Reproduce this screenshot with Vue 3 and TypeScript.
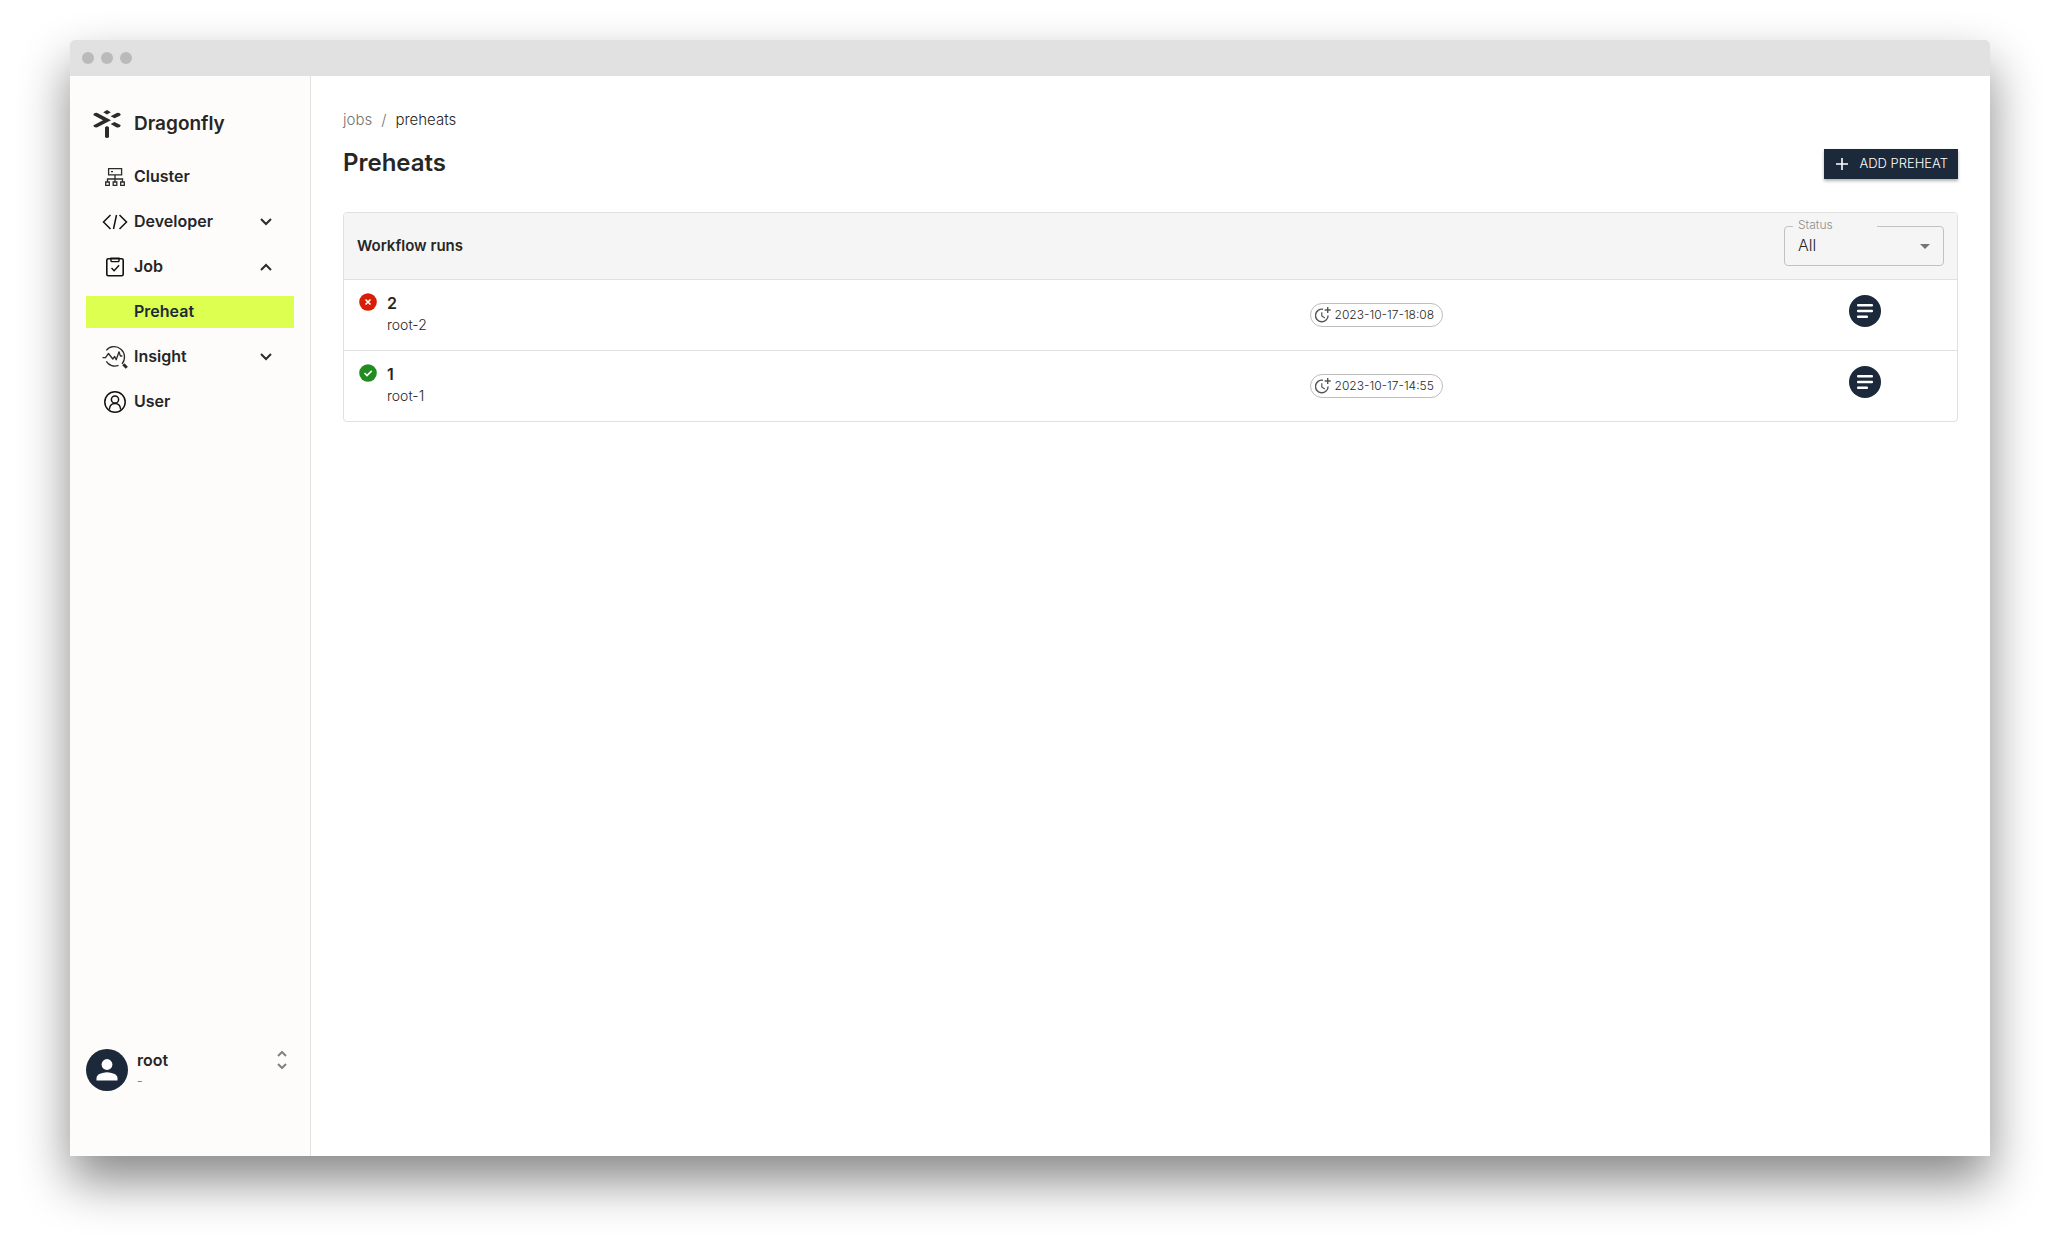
<script setup lang="ts">
import { ref } from 'vue'

interface NavItem {
  label: string
  icon?: 'cluster' | 'developer' | 'job' | 'insight' | 'user'
  expand?: 'open' | 'closed'
  active?: boolean
}

interface Run {
  id: number
  name: string
  state: 'failure' | 'success'
  created: string
}

const navItems: NavItem[] = [
  { label: 'Cluster', icon: 'cluster' },
  { label: 'Developer', icon: 'developer', expand: 'closed' },
  { label: 'Job', icon: 'job', expand: 'open' },
  { label: 'Preheat', active: true },
  { label: 'Insight', icon: 'insight', expand: 'closed' },
  { label: 'User', icon: 'user' },
]

const runs: Run[] = [
  { id: 2, name: 'root-2', state: 'failure', created: '2023-10-17-18:08' },
  { id: 1, name: 'root-1', state: 'success', created: '2023-10-17-14:55' },
]

const status = ref('All')
</script>

<template>
  <div class="desktop">
    <div class="window">
      <div class="titlebar"><i></i><i></i><i></i></div>
      <div class="body">
        <aside class="sidebar">
          <a class="brand" href="#">
            <svg class="logo" width="28" height="28" viewBox="0 0 28 28" fill="#2b2b2b">
              <path d="M14 0l3.800 2.200L14 4.400l-3.800-2.200z" />
              <path d="M0.200 5Q1 2.300 4.300 2.900L18 10.200 4.300 17.300Q1 18 0.200 15.400L10 10.200z" />
              <path d="M27.800 4.800Q27 2.300 23.800 3L17.600 6.300 21.500 8.300 26.500 5.900z" />
              <path d="M27.800 15.600Q27 18.100 23.800 17.400L17.600 14.100 21.500 12.100 26.500 14.500z" />
              <path d="M12 17.300L14 16l2 1.300v9.200Q15.700 28 14 28t-2-1.500z" />
            </svg>
            <span>Dragonfly</span>
          </a>

          <nav class="nav">
            <a
              v-for="item in navItems"
              :key="item.label"
              href="#"
              class="nav-item"
              :class="{ active: item.active }"
            >
              <span class="nav-icon">
                <svg v-if="item.icon === 'cluster'" width="20" height="18" viewBox="0 0 20 18" fill="none" stroke="#2b2b2b" stroke-width="1.300">
                  <path d="M3.600.7h13v6.100h-13zM10 7v7M2.500 14v-3h15v3" />
                  <path d="M.7 14h3.600v3.300H.7zM8.200 14h3.600v3.300H8.200zM15.700 14h3.600v3.300h-3.600z" />
                  <path d="M6 3.700h2" />
                </svg>
                <svg v-else-if="item.icon === 'developer'" width="26" height="16" viewBox="0 0 26 16" fill="none" stroke="#111" stroke-width="1.500">
                  <path d="M8.500 1L1.500 8l7 7M17.500 1l7 7-7 7M14.500 1l-3 14" />
                </svg>
                <svg v-else-if="item.icon === 'job'" width="18" height="20" viewBox="0 0 18 20" fill="none" stroke="#111" stroke-width="1.600">
                  <rect x=".8" y="1.800" width="16.400" height="17" rx="1.500" />
                  <path d="M5 1.200h8v2.600q0 .8-.8.800H5.800Q5 4.600 5 3.800zM5.500 11l2.600 2.700 5-5.400" stroke-width="1.400" />
                </svg>
                <svg v-else-if="item.icon === 'insight'" width="26" height="24" viewBox="0 0 26 24" fill="none" stroke="#2b2b2b" stroke-width="1.300">
                  <path d="M4.300 5.300A10 10 0 1 1 20 18.800M4.300 16.400A10 10 0 0 0 16.500 20.400" />
                  <path d="M.5 12.700h3L6.500 8.500l4.300 5.500 1.900-2.500 1.500 3.200L17 6.800l1.400 4.200h2" stroke-linejoin="round" />
                  <path d="M21.300 19.300l3.500 3.500" stroke-width="3" />
                </svg>
                <svg v-else-if="item.icon === 'user'" width="22" height="22" viewBox="0 0 22 22" fill="none" stroke="#111" stroke-width="1.500">
                  <circle cx="11" cy="11" r="10.200" />
                  <circle cx="11" cy="8.500" r="3.600" />
                  <path d="M5.300 18.500Q5.800 12.600 11 12.600t5.700 5.900" />
                </svg>
              </span>
              <span class="nav-label">{{ item.label }}</span>
              <svg v-if="item.expand" class="chevron" width="12" height="8" viewBox="0 0 12 8" fill="none" stroke="#2b2b2b" stroke-width="2">
                <path :d="item.expand === 'open' ? 'M1 7l5-5 5 5' : 'M1 1l5 5 5-5'" />
              </svg>
            </a>
          </nav>

          <div class="account">
            <span class="avatar">
              <svg width="22" height="22" viewBox="0 0 22 22" fill="#fff">
                <circle cx="11" cy="5.500" r="5.400" />
                <path d="M.5 21.500v-2.300q0-3 3.500-4.500t7-1.500 7 1.500 3.500 4.500v2.300z" />
              </svg>
            </span>
            <div class="who">
              <span class="who-name">root</span>
              <span class="who-mail">-</span>
            </div>
            <button class="unfold" type="button" aria-label="Account menu">
              <svg width="10" height="18" viewBox="0 0 10 18" fill="none" stroke="#808080" stroke-width="2">
                <path d="M1 5l4-4 4 4M1 13l4 4 4-4" />
              </svg>
            </button>
          </div>
        </aside>

        <main class="content">
          <nav class="crumbs" aria-label="Breadcrumb">
            <a href="#">jobs</a>
            <span class="slash">/</span>
            <span>preheats</span>
          </nav>

          <div class="heading">
            <h1>Preheats</h1>
            <button class="add" type="button">
              <svg width="12" height="12" viewBox="0 0 12 12" stroke="#fff" stroke-width="1.600">
                <path d="M6 0v12M0 6h12" />
              </svg>
              <span>ADD PREHEAT</span>
            </button>
          </div>

          <section class="card">
            <header class="card-head">
              <h2>Workflow runs</h2>
              <div class="field">
                <label for="status">Status</label>
                <select id="status" v-model="status">
                  <option>All</option>
                  <option>Success</option>
                  <option>Failure</option>
                </select>
                <svg class="caret" width="10" height="5" viewBox="0 0 10 5" fill="#757575">
                  <path d="M0 0h10L5 5z" />
                </svg>
              </div>
            </header>

            <div v-for="run in runs" :key="run.id" class="run">
              <div class="run-main">
                <svg v-if="run.state === 'failure'" class="state" width="18" height="18" viewBox="0 0 18 18">
                  <circle cx="9" cy="9" r="8.800" fill="#d81e06" />
                  <path d="M6.500 6.500l5 5M11.500 6.500l-5 5" stroke="#fff" stroke-width="1.600" />
                </svg>
                <svg v-else class="state" width="18" height="18" viewBox="0 0 18 18">
                  <circle cx="9" cy="9" r="8.800" fill="#228b22" />
                  <path d="M5.500 9l2.500 2.500 4.700-4.600" fill="none" stroke="#fff" stroke-width="1.600" />
                </svg>
                <div class="run-text">
                  <a class="run-id" href="#">{{ run.id }}</a>
                  <span class="run-name">{{ run.name }}</span>
                </div>
              </div>
              <div class="run-time">
                <span class="chip">
                  <svg width="16" height="16" viewBox="0 0 16 16" fill="none" stroke="#555" stroke-width="1.400">
                    <path d="M8 2.300A6.300 6.300 0 1 0 13.100 8.500" />
                    <path d="M6.800 5.300v3.600l3 2" stroke-width="1.200" />
                    <path d="M12.700 0v6M9.700 3h6" />
                  </svg>
                  <span class="chip-text">{{ run.created }}</span>
                </span>
              </div>
              <div class="run-action">
                <button type="button" class="detail" :aria-label="`Open run ${run.id}`">
                  <svg width="16" height="14" viewBox="0 0 16 14" fill="#fff">
                    <rect width="16" height="2.500" rx="1" />
                    <rect y="5.750" width="16" height="2.500" rx="1" />
                    <rect y="11.500" width="11" height="2.500" rx="1" />
                  </svg>
                </button>
              </div>
            </div>
          </section>
        </main>
      </div>
    </div>
  </div>
</template>

<style>
body {
  margin: 0;
  background: #fff;
}
</style>

<style scoped>
* {
  box-sizing: border-box;
}
.desktop {
  display: flex;
  min-height: 100vh;
  padding: 40px 70px 100px;
  font-family: Inter, 'Liberation Sans', sans-serif;
  font-size: 15px;
  color: #262626;
}
svg {
  display: block;
  flex: none;
}
a {
  color: inherit;
  text-decoration: none;
}
button {
  border: 0;
  padding: 0;
  font-family: inherit;
  cursor: pointer;
}
.window {
  flex: 1;
  display: flex;
  flex-direction: column;
  border-radius: 5px 5px 0 0;
  box-shadow: 0 25px 50px rgba(0, 0, 0, 0.47);
}
.titlebar {
  display: flex;
  align-items: center;
  gap: 7px;
  height: 36px;
  padding: 0 12px;
  border-radius: 5px 5px 0 0;
  background: #e1e1e1;
}
.titlebar i {
  width: 12px;
  height: 12px;
  border-radius: 50%;
  background: #bababa;
}
.body {
  flex: 1;
  display: flex;
  background: #fff;
}
.sidebar {
  display: flex;
  flex-direction: column;
  flex: none;
  width: 241px;
  padding: 32px 16px 65px;
  border-right: 1px solid #e2e2e2;
  background: #fdfcfb;
}
.brand {
  display: flex;
  align-items: center;
  gap: 13px;
  height: 32px;
  padding-left: 7px;
  font-size: 19px;
  font-weight: 600;
}
.brand span,
.nav-label,
.add span,
.chip-text {
  padding-bottom: 2px;
}
.nav {
  display: flex;
  flex-direction: column;
  gap: 13px;
  margin-top: 21px;
}
.nav-item {
  display: flex;
  align-items: center;
  height: 32px;
  padding: 0 22px 0 16px;
  font-size: 16px;
  font-weight: 600;
}
.nav-item.active {
  background: #dcff50;
  color: #1c293a;
}
.nav-icon {
  display: flex;
  justify-content: center;
  width: 26px;
  margin-right: 6px;
}
.nav-label {
  flex: 1;
}
.account {
  display: flex;
  align-items: flex-start;
  margin-top: auto;
}
.avatar {
  display: flex;
  align-items: center;
  justify-content: center;
  width: 42px;
  height: 42px;
  border-radius: 50%;
  background: #1c293a;
}
.who {
  display: flex;
  flex: 1;
  flex-direction: column;
  margin-left: 9px;
}
.who-name {
  font-size: 16px;
  font-weight: 600;
  line-height: 22px;
}
.who-mail {
  font-size: 12px;
  line-height: 20px;
  color: #808080;
}
.unfold {
  margin: 2px 7px 0 0;
  background: none;
}
.content {
  flex: 1;
  min-width: 0;
  padding: 32px;
}
.crumbs {
  display: flex;
  gap: 9px;
  line-height: 24px;
  font-weight: 300;
}
.crumbs a,
.slash {
  color: #757575;
}
.heading {
  display: flex;
  align-items: center;
  justify-content: space-between;
  margin-top: 16px;
  height: 32px;
}
h1 {
  margin: 0;
  padding-bottom: 2px;
  font-size: 24px;
  font-weight: 600;
  line-height: 32px;
}
.add {
  display: flex;
  align-items: center;
  gap: 11px;
  height: 30px;
  padding: 0 10px 0 12px;
  background: #1c293a;
  box-shadow: 0 2px 3px rgba(0, 0, 0, 0.3);
  color: #fff;
  font-size: 13px;
  font-weight: 300;
}
.card {
  margin-top: 32px;
  border: 1px solid #e0e0e0;
  border-radius: 4px;
  overflow: hidden;
}
.card-head {
  display: flex;
  align-items: center;
  justify-content: space-between;
  height: 66px;
  padding: 0 13px;
  background: #f5f5f5;
}
h2 {
  margin: 0;
  padding-bottom: 2px;
  font-size: 15px;
  font-weight: 600;
}
.field {
  position: relative;
  width: 160px;
}
.field label {
  position: absolute;
  top: -8px;
  left: 9px;
  width: 84px;
  padding-left: 5px;
  background: #f5f5f5;
  color: #8c8c8c;
  font-size: 12px;
  font-weight: 300;
  line-height: 14px;
}
.field select {
  display: block;
  width: 100%;
  height: 40px;
  padding: 0 32px 3px 13px;
  border: 1px solid #c1c1c1;
  border-radius: 4px;
  appearance: none;
  background: transparent;
  color: #262626;
  font-family: inherit;
  font-size: 16px;
  font-weight: 300;
}
.caret {
  position: absolute;
  top: 18px;
  right: 14px;
  pointer-events: none;
}
.run {
  display: grid;
  grid-template-columns: 60% 30% 10%;
  height: 71px;
  padding: 0 13px 0 14px;
  border-top: 1px solid #e0e0e0;
}
.run-main {
  display: flex;
  gap: 10px;
  padding: 12px 0 0 1px;
}
.state {
  margin-top: 1px;
}
.run-text {
  display: flex;
  flex-direction: column;
}
.run-id {
  font-size: 16px;
  font-weight: 600;
  line-height: 22px;
}
.run-name {
  font-size: 14px;
  font-weight: 300;
  line-height: 22px;
}
.run-time {
  display: flex;
  align-items: center;
}
.chip {
  display: flex;
  align-items: center;
  gap: 4px;
  height: 24px;
  padding: 0 8px 0 4px;
  border: 1px solid #bdbdbd;
  border-radius: 12px;
  font-size: 12px;
  font-weight: 300;
}
.run-action {
  display: flex;
  justify-content: center;
  padding-top: 15px;
}
.detail {
  display: flex;
  align-items: center;
  justify-content: center;
  width: 32px;
  height: 32px;
  border-radius: 50%;
  background: #1c293a;
}
</style>
